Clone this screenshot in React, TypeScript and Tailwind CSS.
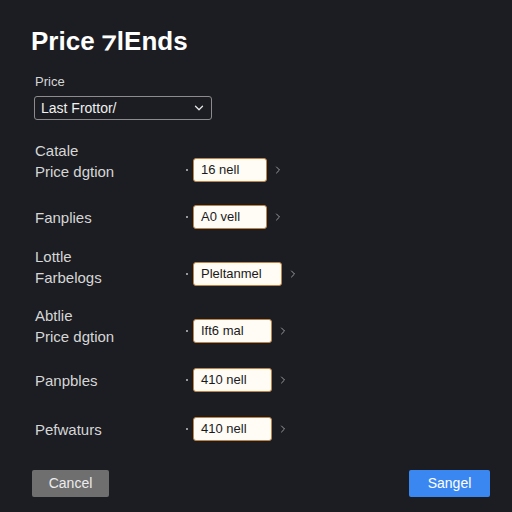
import { ChevronDown, ChevronRight } from "lucide-react"

interface RowProps {
  lines: string[]
  value: string
  width: string
  className?: string
  inputClass?: string
}

function Row({ lines, value, width, className = "", inputClass = "" }: RowProps) {
  const twoLine = lines.length > 1
  return (
    <div className={`flex ${twoLine ? "items-end" : "items-center"} ${className}`}>
      <div className="w-[151px] flex flex-col text-[15px] leading-[21px] text-[#d6d6d6]">
        {lines.map((l, i) => (
          <span key={i}>{l}</span>
        ))}
      </div>
      <div className={`flex items-center ${inputClass}`}>
        <span className="w-[2px] h-[2px] rounded-full bg-[#c0c0c0] mr-[5px]"></span>
        <div className={`${width} h-[24px] flex items-center px-[7px] bg-[#fffcf6] border border-[#c08545] rounded-[3px] text-[13px] text-[#1a1a1a]`}>
          {value}
        </div>
        <ChevronRight size={12} strokeWidth={1.8} className="ml-[5px] text-[#a8a8a8]" />
      </div>
    </div>
  )
}

export default function App() {
  return (
    <div className="w-[512px] h-[512px] bg-[#1b1d22] flex flex-col pl-[35px] pt-[26px] overflow-hidden" style={{ fontFamily: '"Liberation Sans", Arial, sans-serif' }}>
      <h1 className="ml-[-4px] text-[26px] leading-[30px] font-bold text-white">Price ⁊lEnds</h1>

      <div className="mt-[17px] text-[13px] leading-[18px] text-[#d6d6d6]">Price</div>
      <div className="mt-[5px] ml-[-1px] w-[178px] h-[24px] flex items-center justify-between pl-[6px] pr-[5px] border border-[#8c8c8c] rounded-[3px] text-[14px] text-[#f0f0f0]">
        <span>Last Frottor/</span>
        <ChevronDown size={14} strokeWidth={2.2} className="text-[#e6e6e6]" />
      </div>

      <Row className="mt-[20px]" lines={["Catale", "Price dgtion"]} value="16 nell" width="w-[74px]" />
      <Row className="mt-[23px]" lines={["Fanplies"]} value="A0 vell" width="w-[74px]" />
      <Row className="mt-[17px]" lines={["Lottle", "Farbelogs"]} value="Pleltanmel" width="w-[89px]" inputClass="mb-[2px]" />
      <Row className="mt-[17px]" lines={["Abtlie", "Price dgtion"]} value="Ift6 mal" width="w-[79px]" inputClass="mb-[4px]" />
      <Row className="mt-[21px]" lines={["Panpbles"]} value="410 nell" width="w-[79px]" />
      <Row className="mt-[25px]" lines={["Pefwaturs"]} value="410 nell" width="w-[79px]" />

      <div className="mt-[29px] ml-[-3px] mr-[22px] flex justify-between">
        <button className="w-[77px] h-[27px] bg-[#6f6f70] rounded-[2px] text-[14px] text-[#ececec]">Cancel</button>
        <button className="w-[81px] h-[27px] bg-[#3b87f2] rounded-[2px] text-[14px] text-white">Sangel</button>
      </div>
    </div>
  )
}
